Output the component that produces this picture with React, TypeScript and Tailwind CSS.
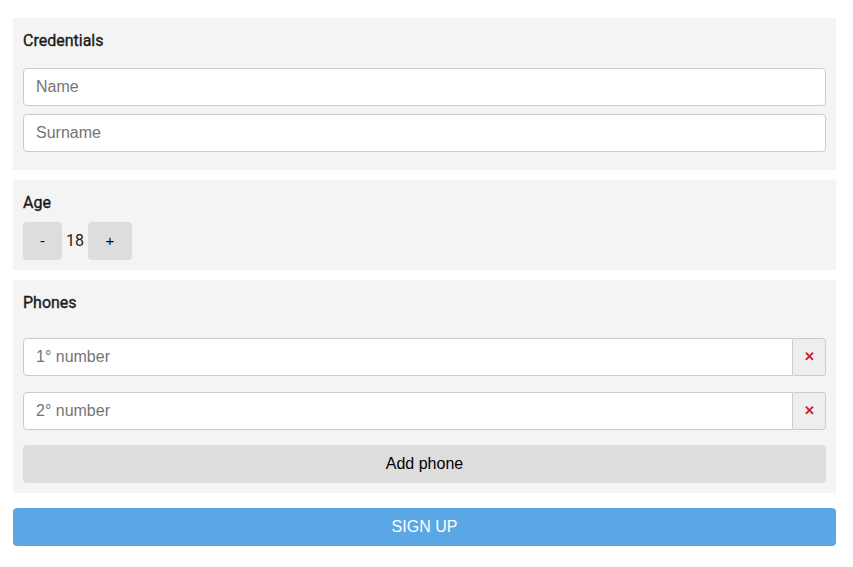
export default function App() {
  const label =
    "font-['Roboto',sans-serif] text-base font-normal leading-6 text-[#1a1a1a] [-webkit-text-stroke:0.35px_#1a1a1a]";
  const input =
    "h-[38px] w-full rounded border border-[#ccc] bg-white px-3 font-['Liberation_Sans',Arial,sans-serif] text-base text-[#333] placeholder:text-[#757575] outline-none";

  return (
    <main className="min-h-screen bg-white pl-[13px] pr-[17px] pt-[18px]">
      <div className="flex flex-col gap-[10px]">
        <section className="bg-[#f4f4f4] px-[10px] pt-[11px] pb-[18px]">
          <div className={label}>Credentials</div>
          <div className="mt-[15px] flex flex-col gap-2">
            <input className={input} placeholder="Name" />
            <input className={input} placeholder="Surname" />
          </div>
        </section>

        <section className="bg-[#f4f4f4] px-[10px] pt-[11px] pb-[10px]">
          <div className={label}>Age</div>
          <div className="mt-[7px] flex items-center">
            <button className="h-[38px] w-[39px] rounded bg-[#dddddd] font-['Liberation_Sans',Arial,sans-serif] text-[15px] text-black">
              -
            </button>
            <span className="w-[26px] text-center font-['Roboto',sans-serif] text-base text-[#222]">18</span>
            <button className="h-[38px] w-[44px] rounded bg-[#dddddd] font-['Liberation_Sans',Arial,sans-serif] text-[15px] text-black">
              +
            </button>
          </div>
        </section>

        <section className="bg-[#f4f4f4] px-[10px] pt-[11px] pb-[10px]">
          <div className={label}>Phones</div>
          <div className="mt-[23px] flex flex-col gap-4">
            {["1° number", "2° number"].map((p) => (
              <div key={p} className="flex">
                <input className={input + " rounded-r-none"} placeholder={p} />
                <button className="flex h-[38px] w-[33px] shrink-0 items-center justify-center rounded-r border border-l-0 border-[#ccc] bg-[#eeeeee] font-['Liberation_Sans',Arial,sans-serif] text-[13px] font-bold text-[#cc1f1f]">
                  ✕
                </button>
              </div>
            ))}
          </div>
          <button className="mt-[15px] h-[38px] w-full rounded bg-[#dddddd] font-['Liberation_Sans',Arial,sans-serif] text-base text-black">
            Add phone
          </button>
        </section>
      </div>

      <button className="mt-[15px] h-[38px] w-full rounded bg-[#5ba6e5] font-['Liberation_Sans',Arial,sans-serif] text-base uppercase text-white">
        Sign up
      </button>
    </main>
  );
}
